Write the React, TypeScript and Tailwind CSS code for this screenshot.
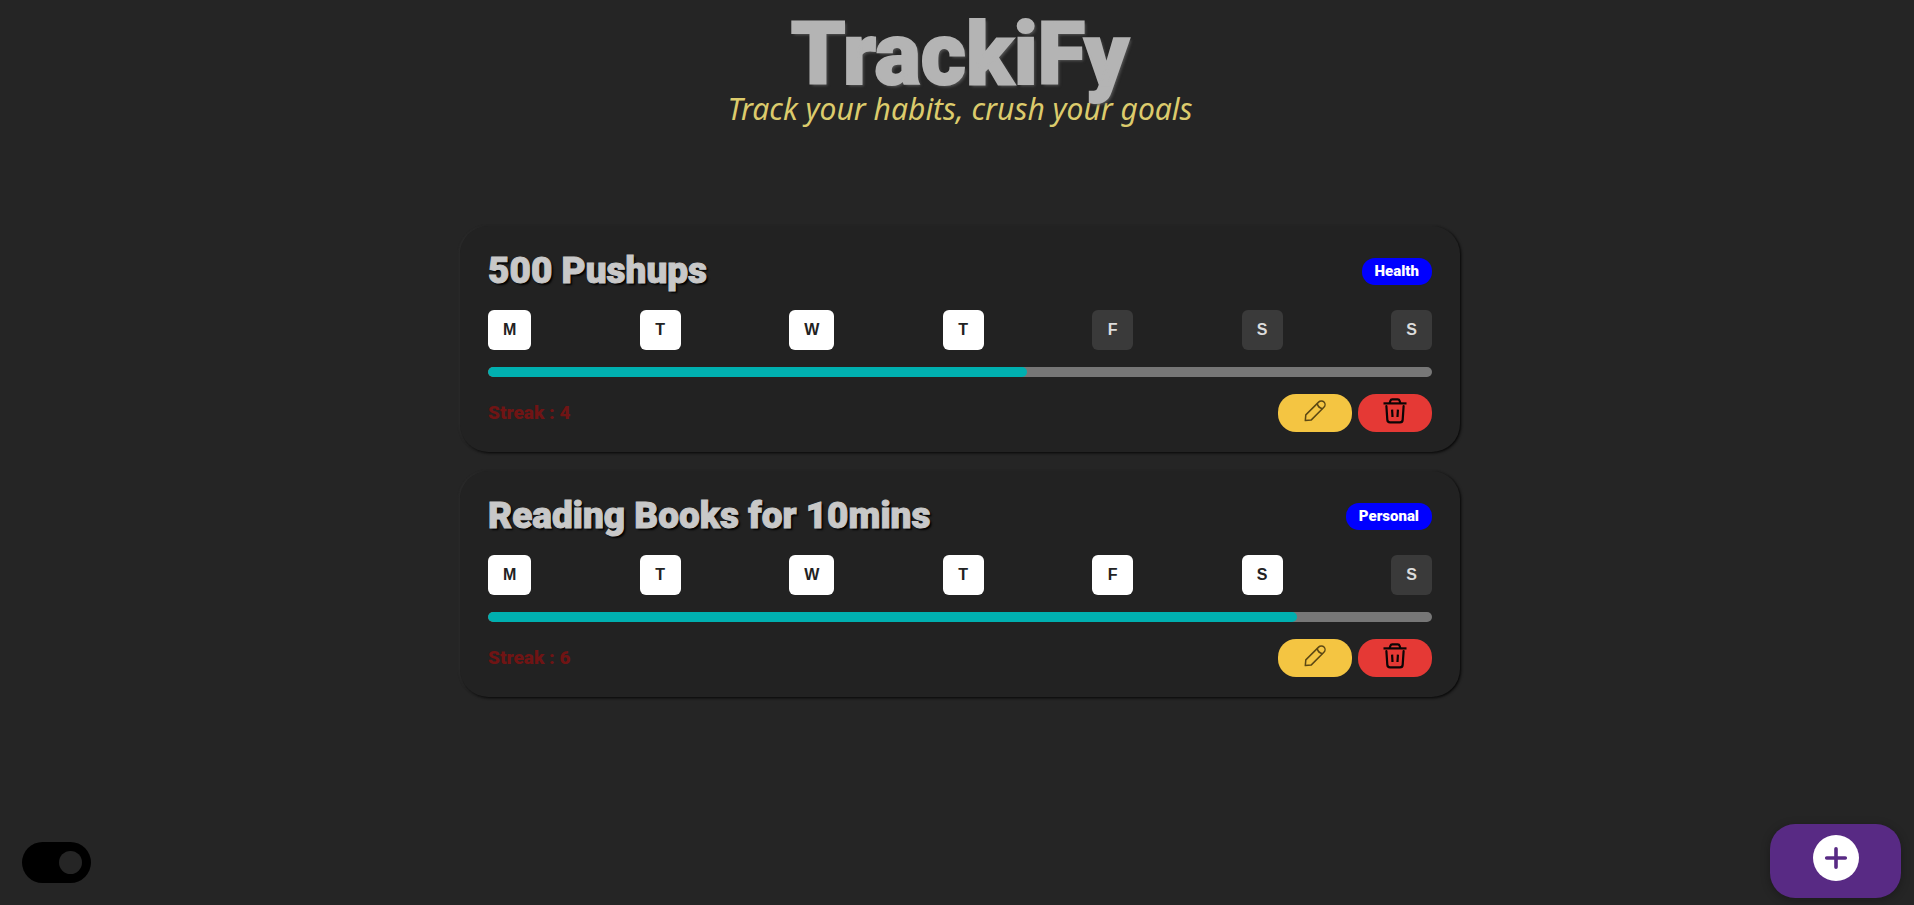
type Habit = {
  id: string;
  name: string;
  category: string;
  done: number;
};

const habits: Habit[] = [
  { id: "pushups", name: "500 Pushups", category: "Health", done: 4 },
  { id: "reading", name: "Reading Books for 10mins", category: "Personal", done: 6 },
];

const days = [
  { letter: "M", label: "Monday" },
  { letter: "T", label: "Tuesday" },
  { letter: "W", label: "Wednesday" },
  { letter: "T", label: "Thursday" },
  { letter: "F", label: "Friday" },
  { letter: "S", label: "Saturday" },
  { letter: "S", label: "Sunday" },
];

function PencilIcon() {
  return (
    <svg
      width="24"
      height="24"
      viewBox="0 0 24 24"
      fill="none"
      stroke="#5c4814"
      strokeWidth="1.5"
      strokeLinejoin="round"
      aria-hidden="true"
    >
      <path d="M2.3 21.6 L2.8 15.9 L15.6 3.1 C17 1.7 19.6 1.6 21 3 C22.4 4.4 22.3 6.9 20.9 8.3 L8.1 21.1 Z" />
      <path d="M14.2 4.5 C14.8 7.2 16.8 9.2 19.5 9.7" />
    </svg>
  );
}

function TrashIcon() {
  return (
    <svg
      width="24"
      height="26"
      viewBox="0 0 24 26"
      fill="none"
      stroke="#0b0505"
      strokeWidth="2.2"
      strokeLinejoin="round"
      aria-hidden="true"
    >
      <path d="M0.5 5.4 H23.5" />
      <path d="M6.7 5.2 L7.3 3 C7.6 1.9 8.3 1.4 9.3 1.4 H14.7 C15.7 1.4 16.4 1.9 16.7 3 L17.3 5.2" />
      <path d="M3.4 8.2 L4.3 21.6 C4.4 23.4 5.3 24.4 7 24.4 H17 C18.7 24.4 19.6 23.4 19.7 21.6 L20.6 8.2" strokeLinecap="round" />
      <path d="M9.1 11.6 L9.5 19" />
      <path d="M14.9 11.6 L14.5 19" />
    </svg>
  );
}

function PlusCircleIcon() {
  return (
    <svg width="46" height="46" viewBox="0 0 46 46" aria-hidden="true">
      <circle cx="23" cy="23" r="23" fill="#fff" />
      <path d="M23 13.7 V32.3 M13.7 23 H32.3" stroke="#582a84" strokeWidth="3.6" strokeLinecap="round" />
    </svg>
  );
}

function HabitCard({ habit }: { habit: Habit }) {
  return (
    <li className="flex flex-col gap-[17px] rounded-[28px] bg-[#222222] px-7 pt-[23px] pb-5 shadow-[1px_1px_3px_rgba(0,0,0,0.9),-1px_0_2px_rgba(70,70,70,0.4)]">
      <div className="flex items-center justify-between">
        <h2 className="text-[37px]/[44px] font-black text-[#c8c8c8] [-webkit-text-stroke:1px_#c8c8c8] [text-shadow:2px_2px_2px_#000]">
          {habit.name}
        </h2>
        <span className="rounded-[13px] bg-[#0000ff] px-[13px] text-[15px]/[27px] font-black text-white">
          {habit.category}
        </span>
      </div>

      <div className="flex justify-between">
        {days.map((day, i) => (
          <button
            key={day.label}
            type="button"
            aria-label={day.label}
            aria-pressed={i < habit.done}
            className={
              i < habit.done
                ? "h-10 min-w-[41px] rounded-md bg-white px-[15px] font-[Liberation_Sans,Arial,sans-serif] text-base font-bold text-[#222222]"
                : "h-10 min-w-[41px] rounded-md bg-[#3a3a3a] px-[15px] font-[Liberation_Sans,Arial,sans-serif] text-base font-bold text-[#dcdcdc]"
            }
          >
            {day.letter}
          </button>
        ))}
      </div>

      <div
        role="progressbar"
        aria-label={habit.name}
        aria-valuemin={0}
        aria-valuemax={7}
        aria-valuenow={habit.done}
        className="h-[10px] overflow-hidden rounded-[5px] bg-[#777777]"
      >
        <div className="h-full rounded-[5px] bg-[#00b0b0]" style={{ width: `${(habit.done / 7) * 100}%` }} />
      </div>

      <div className="flex items-center justify-between">
        <p className="text-[19px]/[24px] font-black text-[#701414]">Streak : {habit.done}</p>
        <div className="flex gap-[6px]">
          <button
            type="button"
            aria-label={`Edit ${habit.name}`}
            className="flex h-[38px] w-[74px] items-center justify-center rounded-[18px] bg-[#f4c542] pb-1"
          >
            <PencilIcon />
          </button>
          <button
            type="button"
            aria-label={`Delete ${habit.name}`}
            className="flex h-[38px] w-[74px] items-center justify-center rounded-[18px] bg-[#e53935] pb-1"
          >
            <TrashIcon />
          </button>
        </div>
      </div>
    </li>
  );
}

export default function App() {
  return (
    <div className="min-h-screen bg-[#252525] pl-[6px] font-[Roboto,sans-serif]">
      <header className="flex flex-col items-center pt-[15px]">
        <h1 className="z-10 text-[87px]/[78px] font-black text-[#b4b4b4] [-webkit-text-stroke:2px_#b4b4b4] [text-shadow:2px_2px_3px_#555]">
          TrackiFy
        </h1>
        <p className="font-[Noto_Sans,sans-serif] text-[30px]/[32px] text-[#dccb6c] italic">
          Track your habits, crush your goals
        </p>
      </header>

      <main className="mx-auto mt-[101px] w-full max-w-[1000px]">
        <ul className="flex flex-col gap-[19px]">
          {habits.map((habit) => (
            <HabitCard key={habit.id} habit={habit} />
          ))}
        </ul>
      </main>

      <label className="fixed bottom-[22px] left-[22px] flex h-[41px] w-[69px] cursor-pointer items-center rounded-[21px] bg-black">
        <input type="checkbox" defaultChecked aria-label="Dark mode" className="peer sr-only" />
        <span className="ml-[9px] size-[23px] rounded-full bg-[#252525] peer-checked:ml-[37px]" />
      </label>

      <button
        type="button"
        aria-label="Add habit"
        className="fixed right-[13px] bottom-[7px] flex h-[74px] w-[131px] items-center justify-center rounded-[25px] bg-[#582a84] pb-[6px] shadow-[0_2px_10px_rgba(0,0,0,0.3)]"
      >
        <PlusCircleIcon />
      </button>
    </div>
  );
}
